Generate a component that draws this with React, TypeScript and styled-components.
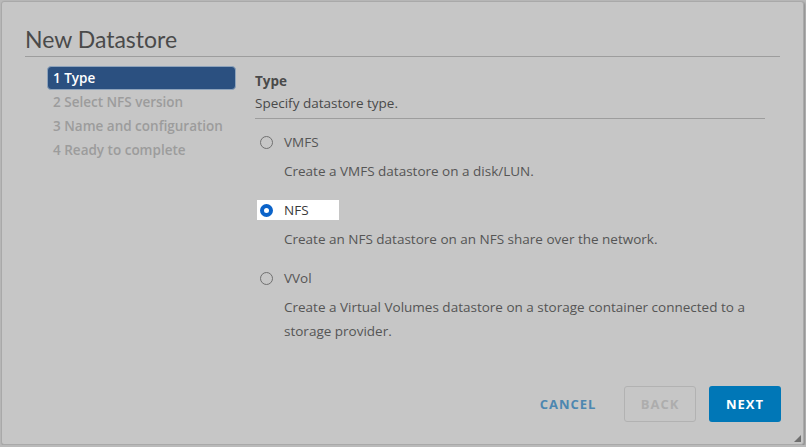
import React from 'react'
import styled, { createGlobalStyle } from 'styled-components'

const GlobalStyle = createGlobalStyle`
  html, body {
    margin: 0;
    padding: 0;
    background: #b9b9b9;
    font-family: "Open Sans", Lato, sans-serif;
  }
`

const Dialog = styled.div`
  position: relative;
  box-sizing: border-box;
  width: 803px;
  height: 444px;
  margin: 1px 0 0 1px;
  background: #c6c6c6;
  border: 1px solid #a9a9a9;
  border-radius: 3px;
  box-shadow: 1px 1px 2px rgba(0, 0, 0, 0.25);
  padding: 22px 23px 0 23px;
  display: flex;
  flex-direction: column;
`

const Title = styled.h1`
  margin: 0;
  font-family: Lato, sans-serif;
  font-size: 23px;
  font-weight: 400;
  color: #4a4a4a;
  line-height: 30px;
  padding-bottom: 2px;
  border-bottom: 1px solid #9d9d9d;
`

const Body = styled.div`
  display: flex;
  padding: 9px 0 0 22px;
  flex: 1;
`

const Nav = styled.ul`
  list-style: none;
  margin: 0;
  padding: 0;
  width: 189px;
  display: flex;
  flex-direction: column;
`

const NavItem = styled.li<{ $active?: boolean }>`
  height: 24px;
  line-height: 22px;
  padding: 0 5px;
  border-radius: 4px;
  font-size: 13.5px;
  font-weight: 600;
  white-space: nowrap;
  color: ${({ $active }) => ($active ? '#ffffff' : '#9c9c9c')};
  background: ${({ $active }) => ($active ? '#2b5080' : 'transparent')};
  border: ${({ $active }) => ($active ? '1px solid #8ea3bb' : '1px solid transparent')};
  box-sizing: border-box;
`

const Content = styled.div`
  margin-left: 19px;
  width: 510px;
  display: flex;
  flex-direction: column;
`

const Heading = styled.div`
  font-size: 13.5px;
  font-weight: 700;
  color: #4a4a4a;
  margin-top: 6px;
  line-height: 18px;
`

const Sub = styled.div`
  font-size: 13.5px;
  color: #4a4a4a;
  line-height: 18px;
  margin-top: 4px;
  padding-bottom: 6px;
  border-bottom: 1px solid #9d9d9d;
`

const OptionList = styled.div`
  display: flex;
  flex-direction: column;
  gap: 17px;
  margin-top: 13px;
`

const Option = styled.div`
  display: flex;
  flex-direction: column;
`

const RadioRow = styled.label<{ $focus?: boolean }>`
  display: flex;
  align-items: center;
  gap: 11px;
  height: 20px;
  width: 82px;
  padding-left: 3px;
  margin-left: 2px;
  box-sizing: border-box;
  background: ${({ $focus }) => ($focus ? '#ffffff' : 'transparent')};
  font-size: 13.5px;
  color: ${({ $focus }) => ($focus ? '#3a3a3a' : '#555555')};
`

const Circle = styled.span<{ $checked?: boolean }>`
  box-sizing: border-box;
  width: 13px;
  height: 13px;
  border-radius: 50%;
  border: ${({ $checked }) => ($checked ? '4px solid #0b63c9' : '1.5px solid #707070')};
  ${({ $checked }) => $checked && 'box-shadow: 0 0 0 1px #fff inset;'}
`

const Desc = styled.div`
  font-size: 13.5px;
  color: #555555;
  line-height: 24px;
  margin: 7px 0 0 29px;
  width: 482px;
`

const Footer = styled.div`
  display: flex;
  justify-content: flex-end;
  align-items: center;
  gap: 13px;
  margin-right: -1px;
  padding-bottom: 22px;
`

const Button = styled.button<{ $variant: 'link' | 'outline' | 'primary' }>`
  height: 36px;
  box-sizing: border-box;
  font-family: "Open Sans", Lato, sans-serif;
  font-size: 13px;
  font-weight: 700;
  letter-spacing: 1px;
  border-radius: 3px;
  padding: 0;
  width: ${({ $variant }) => ($variant === 'link' ? '86px' : '72px')};
  color: ${({ $variant }) =>
    $variant === 'primary' ? '#ffffff' : $variant === 'link' ? '#4d87b0' : '#adadad'};
  background: ${({ $variant }) => ($variant === 'primary' ? '#0077b7' : 'transparent')};
  border: ${({ $variant }) =>
    $variant === 'outline' ? '1px solid #b2b2b2' : '1px solid transparent'};
`

const Grip = styled.svg`
  position: absolute;
  right: 2px;
  bottom: 2px;
`

const options = [
  { name: 'VMFS', desc: 'Create a VMFS datastore on a disk/LUN.' },
  { name: 'NFS', desc: 'Create an NFS datastore on an NFS share over the network.', checked: true },
  {
    name: 'VVol',
    desc: 'Create a Virtual Volumes datastore on a storage container connected to a storage provider.',
  },
]

function App() {
  return (
    <>
      <GlobalStyle />
      <Dialog>
        <Title>New Datastore</Title>
        <Body>
          <Nav>
            <NavItem $active>1 Type</NavItem>
            <NavItem>2 Select NFS version</NavItem>
            <NavItem>3 Name and configuration</NavItem>
            <NavItem>4 Ready to complete</NavItem>
          </Nav>
          <Content>
            <Heading>Type</Heading>
            <Sub>Specify datastore type.</Sub>
            <OptionList>
              {options.map((o) => (
                <Option key={o.name}>
                  <RadioRow $focus={o.checked}>
                    <Circle $checked={o.checked} />
                    {o.name}
                  </RadioRow>
                  <Desc>{o.desc}</Desc>
                </Option>
              ))}
            </OptionList>
          </Content>
        </Body>
        <Footer>
          <Button $variant="link">CANCEL</Button>
          <Button $variant="outline">BACK</Button>
          <Button $variant="primary">NEXT</Button>
        </Footer>
        <Grip width="7" height="7" viewBox="0 0 7 7">
          <path d="M7 0 L7 7 L0 7 Z" fill="#6f6f6f" />
        </Grip>
      </Dialog>
    </>
  )
}

export default App
